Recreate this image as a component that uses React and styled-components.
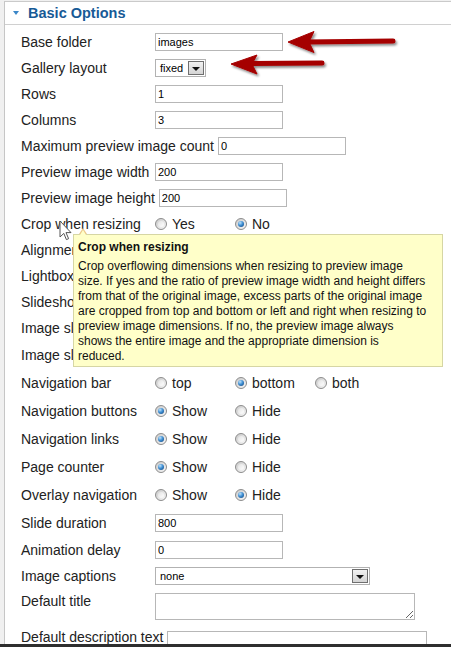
import React from "react";
import styled, { createGlobalStyle } from "styled-components";

const GlobalStyle = createGlobalStyle`
  html, body {
    margin: 0;
    padding: 0;
    background: #f0f0f0;
  }
  body {
    font-family: "Liberation Sans", Arial, sans-serif;
  }
`;

const Page = styled.div`
  position: relative;
  width: 451px;
  height: 647px;
  display: flex;
  flex-direction: column;
  overflow: hidden;
  background: #f0f0f0;
`;

const Panel = styled.div`
  flex: 1;
  min-height: 0;
  margin: 1px 0 0 4px;
  border-top: 1px solid #cacaca;
  border-left: 1px solid #c6c6c6;
  background: #fff;
  overflow: hidden;
`;

const BottomEdge = styled.div`
  height: 3px;
  background: #2e2e2e;
`;

const Header = styled.div`
  height: 22px;
  display: flex;
  align-items: center;
  gap: 9px;
  padding-left: 8px;
  border-bottom: 1px solid #d0d0d0;
`;

const Caret = styled.span`
  width: 0;
  height: 0;
  border-left: 3px solid transparent;
  border-right: 3px solid transparent;
  border-top: 4px solid #3b87c8;
`;

const Title = styled.h3`
  margin: 0;
  font-size: 14.5px;
  font-weight: bold;
  color: #175a96;
`;

const Body = styled.div`
  padding-top: 4px;
`;

const Row = styled.div`
  display: flex;
  align-items: ${(p) => (p.$top ? "flex-start" : "center")};
  height: ${(p) => p.$h || 26}px;
  padding: ${(p) => (p.$top ? "4px" : "0")} 0 0 16px;
  box-sizing: border-box;
`;

const Label = styled.label`
  min-width: 130px;
  margin-right: 4px;
  font-size: 14px;
  line-height: 16px;
  color: #222;
  white-space: nowrap;
`;

const TextInput = styled.input`
  width: ${(p) => p.$w || 128}px;
  height: 18px;
  box-sizing: border-box;
  margin: ${(p) => p.$mt || 0}px 0 0;
  padding: 0 2px;
  border: 1px solid #b7b7b7;
  font-family: "Liberation Sans", Arial, sans-serif;
  font-size: 11px;
  color: #000;
  outline: none;
`;

const TextArea = styled.textarea`
  width: 260px;
  height: 27px;
  box-sizing: border-box;
  margin: 0;
  padding: 2px;
  border: 1px solid #b7b7b7;
  font-family: "Liberation Sans", Arial, sans-serif;
  font-size: 11px;
  resize: both;
  outline: none;
`;

const Select = styled.div`
  width: ${(p) => p.$w}px;
  height: 18px;
  box-sizing: border-box;
  display: flex;
  align-items: center;
  justify-content: space-between;
  padding: 0 1px 0 4px;
  border: 1px solid #b2b2b2;
  font-size: 11px;
  color: #000;
`;

const DropButton = styled.span`
  width: 16px;
  height: 14px;
  box-sizing: border-box;
  display: flex;
  align-items: center;
  justify-content: center;
  border: 1px solid #6f6f6f;
  background: linear-gradient(#f2f2f2, #d4d4d4);

  &::after {
    content: "";
    border-left: 4px solid transparent;
    border-right: 4px solid transparent;
    border-top: 4px solid #111;
    margin-top: 2px;
  }
`;

const Options = styled.div`
  display: flex;
`;

const Option = styled.span`
  width: 80px;
  display: flex;
  align-items: center;
  gap: 5px;
  font-size: 14px;
  color: #222;
`;

const RadioDot = styled.span`
  position: relative;
  flex: none;
  width: 12px;
  height: 12px;
  box-sizing: border-box;
  border-radius: 50%;
  border: 1px solid #8c8c8c;
  background: linear-gradient(135deg, #c9c9c9, #f8f8f8);

  &::after {
    content: "";
    position: absolute;
    inset: 2px;
    border-radius: 50%;
    background: ${(p) =>
      p.$on
        ? "radial-gradient(circle at 35% 30%, #bfe3fb 0, #3f8fd3 45%, #0c3c74 100%)"
        : "linear-gradient(135deg, #e2e2e2, #ffffff)"};
  }
`;

const Tooltip = styled.div`
  position: absolute;
  left: 73px;
  top: 234px;
  width: 370px;
  height: 133px;
  box-sizing: border-box;
  padding: 5px 4px 0;
  background: #ffffc9;
  border: 1px solid #d6d6a4;
  font-size: 12px;
  color: #111;

  &::before {
    content: "";
    position: absolute;
    left: 5px;
    top: -7px;
    border-left: 4px solid transparent;
    border-right: 4px solid transparent;
    border-bottom: 6px solid #ecc98a;
  }
  &::after {
    content: "";
    position: absolute;
    left: 6px;
    top: -5px;
    border-left: 3px solid transparent;
    border-right: 3px solid transparent;
    border-bottom: 5px solid #ffffc9;
  }
`;

const TipTitle = styled.div`
  font-weight: bold;
  line-height: 15px;
  margin-bottom: 4px;
`;

const TipText = styled.div`
  line-height: 15px;
  white-space: nowrap;
`;

const Overlay = styled.svg`
  position: absolute;
  left: 0;
  top: 0;
  pointer-events: none;
`;

const Cursor = styled.svg`
  position: absolute;
  left: 59px;
  top: 220px;
  pointer-events: none;
`;

const Radios = ({ items, on }) => (
  <Options>
    {items.map((it) => (
      <Option key={it}>
        <RadioDot $on={it === on} />
        {it}
      </Option>
    ))}
  </Options>
);

const Dropdown = ({ w, value }) => (
  <Select $w={w}>
    <span>{value}</span>
    <DropButton />
  </Select>
);

const tipLines = [
  "Crop overflowing dimensions when resizing to preview image",
  "size. If yes and the ratio of preview image width and height differs",
  "from that of the original image, excess parts of the original image",
  "are cropped from top and bottom or left and right when resizing to",
  "preview image dimensions. If no, the preview image always",
  "shows the entire image and the appropriate dimension is",
  "reduced.",
];

export default function App() {
  return (
    <Page>
      <GlobalStyle />
      <Panel>
        <Header>
          <Caret />
          <Title>Basic Options</Title>
        </Header>
        <Body>
          <Row>
            <Label>Base folder</Label>
            <TextInput defaultValue="images" />
          </Row>
          <Row>
            <Label>Gallery layout</Label>
            <Dropdown w={51} value="fixed" />
          </Row>
          <Row>
            <Label>Rows</Label>
            <TextInput defaultValue="1" />
          </Row>
          <Row>
            <Label>Columns</Label>
            <TextInput defaultValue="3" />
          </Row>
          <Row>
            <Label>Maximum preview image count</Label>
            <TextInput defaultValue="0" />
          </Row>
          <Row>
            <Label>Preview image width</Label>
            <TextInput defaultValue="200" />
          </Row>
          <Row>
            <Label>Preview image height</Label>
            <TextInput defaultValue="200" />
          </Row>
          <Row>
            <Label>Crop when resizing</Label>
            <Radios items={["Yes", "No"]} on="No" />
          </Row>
          {/* rows below are mostly hidden by the tooltip */}
          <Row>
            <Label>Alignment</Label>
          </Row>
          <Row>
            <Label>Lightbox</Label>
          </Row>
          <Row>
            <Label>Slideshow</Label>
          </Row>
          <Row>
            <Label>Image slider</Label>
          </Row>
          <Row $h={28}>
            <Label>Image slider</Label>
          </Row>
          <Row $h={28}>
            <Label>Navigation bar</Label>
            <Radios items={["top", "bottom", "both"]} on="bottom" />
          </Row>
          <Row $h={28}>
            <Label>Navigation buttons</Label>
            <Radios items={["Show", "Hide"]} on="Show" />
          </Row>
          <Row $h={28}>
            <Label>Navigation links</Label>
            <Radios items={["Show", "Hide"]} on="Show" />
          </Row>
          <Row $h={28}>
            <Label>Page counter</Label>
            <Radios items={["Show", "Hide"]} on="Show" />
          </Row>
          <Row $h={28}>
            <Label>Overlay navigation</Label>
            <Radios items={["Show", "Hide"]} on="Hide" />
          </Row>
          <Row $h={28}>
            <Label>Slide duration</Label>
            <TextInput defaultValue="800" />
          </Row>
          <Row>
            <Label>Animation delay</Label>
            <TextInput defaultValue="0" />
          </Row>
          <Row>
            <Label>Image captions</Label>
            <Dropdown w={215} value="none" />
          </Row>
          <Row $h={36} $top>
            <Label>Default title</Label>
            <TextArea />
          </Row>
          <Row $h={30} $top>
            <Label>Default description text</Label>
            <TextInput $w={260} $mt={2} />
          </Row>
        </Body>
      </Panel>
      <BottomEdge />

      <Tooltip>
        <TipTitle>Crop when resizing</TipTitle>
        {tipLines.map((l) => (
          <TipText key={l}>{l}</TipText>
        ))}
      </Tooltip>

      <Overlay width="451" height="100" viewBox="0 0 451 100">
        <defs>
          <filter id="sh" x="-10%" y="-30%" width="130%" height="180%">
            <feDropShadow dx="1.5" dy="2" stdDeviation="1.2" floodColor="#000" floodOpacity="0.45" />
          </filter>
        </defs>
        <g fill="#a50000" stroke="#a50000" filter="url(#sh)">
          <line x1="306" y1="42" x2="393" y2="41" strokeWidth="5" strokeLinecap="round" />
          <polygon points="288,42 314,31.5 309,42 314,52.5" strokeWidth="1" strokeLinejoin="round" />
          <line x1="251" y1="63.5" x2="322" y2="63" strokeWidth="5" strokeLinecap="round" />
          <polygon points="231,64 257,55 252,64 257,74" strokeWidth="1" strokeLinejoin="round" />
        </g>
      </Overlay>

      <Cursor width="14" height="22" viewBox="0 0 14 22">
        <path
          d="M1 1 L1 17 L4.8 13.4 L7.4 19.6 L9.6 18.7 L7 12.6 L12 12.6 Z"
          fill="#fff"
          stroke="#555"
          strokeWidth="1"
          strokeLinejoin="round"
        />
      </Cursor>
    </Page>
  );
}
